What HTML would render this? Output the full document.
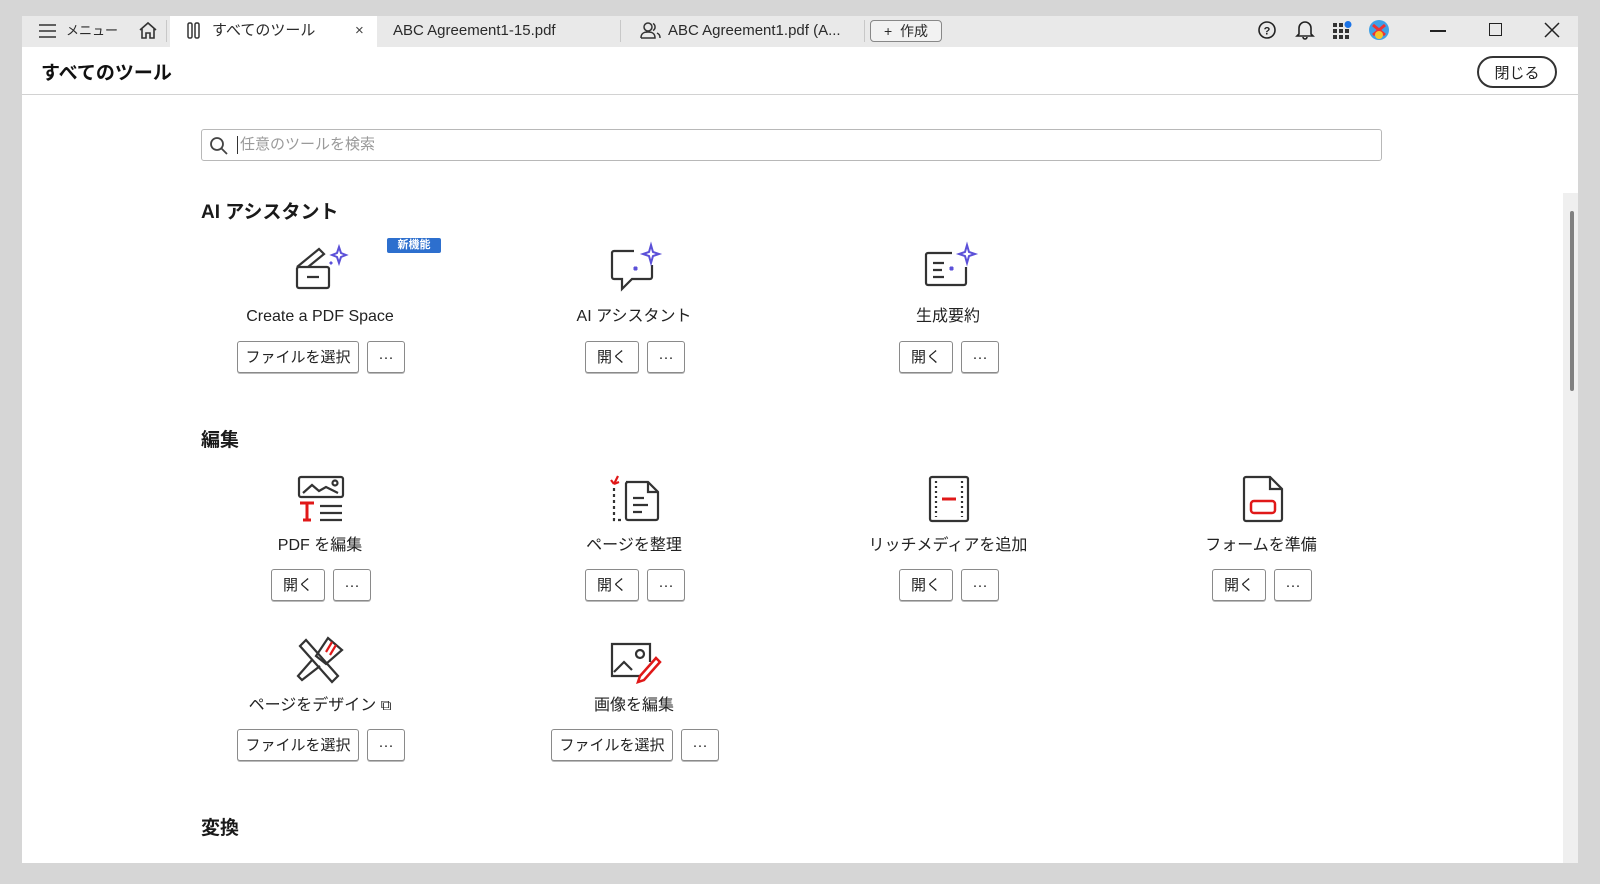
<!DOCTYPE html>
<html><head><meta charset="utf-8"><style>
*{margin:0;padding:0;box-sizing:border-box}
body{width:1600px;height:884px;background:#d6d6d6;font-family:"Liberation Sans","Noto Sans CJK JP",sans-serif;color:#222;position:relative;overflow:hidden}
.a{position:absolute}
.win{left:22px;top:16px;width:1556px;height:847px;background:#fff}
.tabbar{left:22px;top:16px;width:1556px;height:31px;background:#e9e9e9}
.t{position:absolute;white-space:nowrap;font-size:15px;color:#2a2a2a;line-height:1}
.btn{position:absolute;height:32px;border:1px solid #8a8a8a;border-radius:3px;background:#fff;font-size:15px;line-height:1;display:flex;align-items:center;justify-content:center;color:#222;box-shadow:0 1px 0 #bbb}
.lbl{position:absolute;font-size:16px;line-height:20px;text-align:center;width:300px;white-space:nowrap;color:#222}
.h{position:absolute;font-size:19px;font-weight:bold;color:#1a1a1a}
svg{position:absolute;overflow:visible}
</style></head><body>
<div class="a win"></div>
<div class="a tabbar"></div>
<svg style="left:39px;top:24px" width="18" height="14"><path d="M0 1H17M0 7H17M0 13H17" stroke="#333" stroke-width="1.6"/></svg>
<div class="t" style="left:66px;top:24px;font-size:13px">メニュー</div>
<svg style="left:138px;top:21px" width="20" height="18"><path d="M2 9L10 2L18 9M4 7V17H8V12H12V17H16V7" fill="none" stroke="#333" stroke-width="1.6"/></svg>
<div class="a" style="left:166px;top:20px;width:1px;height:22px;background:#c8c8c8"></div>
<div class="a" style="left:170px;top:16px;width:207px;height:31px;background:#fff"></div>
<svg style="left:187px;top:22px" width="14" height="17"><rect x="1" y="1" width="4" height="15" rx="1.5" fill="none" stroke="#333" stroke-width="1.5"/><rect x="8" y="1" width="4" height="15" rx="1.5" fill="none" stroke="#333" stroke-width="1.5"/></svg>
<div class="t" style="left:212px;top:23px">すべてのツール</div>
<div class="t" style="left:355px;top:23px;color:#444">×</div>
<div class="t" style="left:393px;top:23px">ABC Agreement1-15.pdf</div>
<div class="a" style="left:620px;top:20px;width:1px;height:22px;background:#c8c8c8"></div>
<svg style="left:640px;top:21px" width="22" height="18"><circle cx="8" cy="6" r="4" fill="none" stroke="#333" stroke-width="1.5"/><path d="M1 17C1 12 4 11 8 11S15 12 15 17H1M13 2.5A4 4 0 0 1 13 9.5M17 12C19 13 20 14 20 17" fill="none" stroke="#333" stroke-width="1.5"/></svg>
<div class="t" style="left:668px;top:23px">ABC Agreement1.pdf (A...</div>
<div class="a" style="left:864px;top:20px;width:1px;height:22px;background:#c8c8c8"></div>
<div class="a" style="left:870px;top:20px;width:72px;height:22px;border:1px solid #888;border-radius:4px;background:#f2f2f2;display:flex;align-items:center;justify-content:center;font-size:14px;color:#2a2a2a">+&nbsp; 作成</div>
<svg style="left:1258px;top:21px" width="18" height="18"><circle cx="9" cy="9" r="8" fill="none" stroke="#222" stroke-width="1.6"/><text x="9" y="13.5" font-size="11" font-weight="bold" text-anchor="middle" fill="#222" font-family="Liberation Sans">?</text></svg>
<svg style="left:1296px;top:20px" width="18" height="20"><path d="M3 14V8A6 6 0 0 1 15 8V14L17 16H1Z M7 17A2 2 0 0 0 11 17" fill="none" stroke="#222" stroke-width="1.6"/></svg>
<svg style="left:1333px;top:21px" width="20" height="18"><g fill="#333"><rect x="0" y="2" width="4" height="4"/><rect x="6" y="2" width="4" height="4"/><rect x="0" y="8" width="4" height="4"/><rect x="6" y="8" width="4" height="4"/><rect x="12" y="8" width="4" height="4"/><rect x="0" y="14" width="4" height="4"/><rect x="6" y="14" width="4" height="4"/><rect x="12" y="14" width="4" height="4"/></g><circle cx="15" cy="3.5" r="3.5" fill="#1a73e8"/></svg>
<svg style="left:1369px;top:20px" width="20" height="20"><circle cx="10" cy="10" r="10" fill="#3fa0e8"/><path d="M4 5L16 15M16 5L4 15" stroke="#e33" stroke-width="3"/><circle cx="10" cy="15" r="4" fill="#f7c52b"/></svg>
<div class="a" style="left:1430px;top:30px;width:16px;height:1.5px;background:#222"></div>
<div class="a" style="left:1489px;top:23px;width:13px;height:13px;border:1.5px solid #222"></div>
<svg style="left:1545px;top:23px" width="14" height="14"><path d="M0 0L14 14M14 0L0 14" stroke="#222" stroke-width="1.5"/></svg>
<div class="a" style="left:22px;top:94px;width:1556px;height:1px;background:#d2d2d2"></div>
<div class="a" style="left:41px;top:58px;font-size:19px;font-weight:bold;color:#111">すべてのツール</div>
<div class="a" style="left:1477px;top:56px;width:80px;height:32px;border:2px solid #333;border-radius:16px;display:flex;align-items:center;justify-content:center;font-size:15px">閉じる</div>
<div class="a" style="left:1563px;top:193px;width:15px;height:670px;background:#efefef"></div>
<div class="a" style="left:1570px;top:211px;width:4px;height:180px;background:#808080;border-radius:2px"></div>
<div class="a" style="left:201px;top:129px;width:1181px;height:32px;border:1px solid #b8b8b8;border-radius:3px"></div>
<svg style="left:210px;top:137px" width="18" height="18"><circle cx="7" cy="7" r="6" fill="none" stroke="#444" stroke-width="1.8"/><path d="M11.5 11.5L17 17" stroke="#444" stroke-width="1.8"/></svg>
<div class="a" style="left:237px;top:136px;width:1px;height:18px;background:#333"></div>
<div class="t" style="left:240px;top:137px;color:#9a9a9a">任意のツールを検索</div>
<div class="h" style="left:201px;top:197px">AI アシスタント</div>
<div class="a" style="left:387px;top:238px;width:54px;height:15px;background:#2d6fce;color:#fff;font-size:11px;font-weight:bold;text-align:center;line-height:15px;border-radius:2px">新機能</div>
<svg style="left:294px;top:245px" width="52" height="46" fill="none" stroke="#333" stroke-width="2.2"><rect x="3" y="22" width="32" height="21" rx="2"/><path d="M3 22L25 4L30 9L14 22M13 32H25"/><path d="M45 2L47 8L52 10L47 12L45 18L43 12L38 10L43 8Z" stroke="#5b50d8" stroke-width="2"/><path d="M36 17l2 2m0-2l-2 2" stroke="#5b50d8" stroke-width="2.5"/></svg>
<div class="lbl" style="left:170px;top:307px">Create a PDF Space</div>
<div class="btn" style="left:237px;top:341px;width:122px">ファイルを選択</div>
<div class="btn" style="left:367px;top:341px;width:38px">···</div>
<svg style="left:610px;top:245px" width="56" height="48" fill="none" stroke="#333" stroke-width="2.2"><path d="M24 6H4a2 2 0 0 0-2 2V32a2 2 0 0 0 2 2H12V44L22 34H40a2 2 0 0 0 2-2V20"/><path d="M41 0L43 7L49 9L43 11L41 18L39 11L33 9L39 7Z" stroke="#5b50d8" stroke-width="2"/><path d="M24 22l3 3m0-3l-3 3" stroke="#5b50d8" stroke-width="2.5"/></svg>
<div class="lbl" style="left:484px;top:307px">AI アシスタント</div>
<div class="btn" style="left:585px;top:341px;width:54px">開く</div>
<div class="btn" style="left:647px;top:341px;width:38px">···</div>
<svg style="left:924px;top:245px" width="56" height="44" fill="none" stroke="#333" stroke-width="2.2"><path d="M28 8H4a2 2 0 0 0-2 2V38a2 2 0 0 0 2 2H40a2 2 0 0 0 2-2V22"/><path d="M9 18H20M9 25H18M9 32H20"/><path d="M43 0L45 7L51 9L45 11L43 18L41 11L35 9L41 7Z" stroke="#5b50d8" stroke-width="2"/><path d="M26 22l3 3m0-3l-3 3" stroke="#5b50d8" stroke-width="2.5"/></svg>
<div class="lbl" style="left:798px;top:307px">生成要約</div>
<div class="btn" style="left:899px;top:341px;width:54px">開く</div>
<div class="btn" style="left:961px;top:341px;width:38px">···</div>
<div class="h" style="left:201px;top:425px">編集</div>
<svg style="left:298px;top:475px" width="48" height="48" fill="none" stroke="#333" stroke-width="2.2"><rect x="1" y="2" width="44" height="20" rx="2"/><path d="M5 18L14 10L21 16L28 12L40 18"/><circle cx="37" cy="8" r="2.5"/><path d="M2 28H16M9 28V45M5 45H13" stroke="#e01818" stroke-width="3"/><path d="M22 31H44M22 38H44M22 45H44"/></svg>
<div class="lbl" style="left:170px;top:536px">PDF を編集</div>
<div class="btn" style="left:271px;top:569px;width:54px">開く</div>
<div class="btn" style="left:333px;top:569px;width:38px">···</div>
<svg style="left:608px;top:474px" width="56" height="50" fill="none" stroke="#333" stroke-width="2.2"><path d="M6 14V46H14" stroke-dasharray="3 3"/><path d="M18 8H40L50 18V44a2 2 0 0 1-2 2H20a2 2 0 0 1-2-2V10a2 2 0 0 1 2-2Z"/><path d="M40 8V18H50M25 24H36M25 31H40M25 38H34"/><path d="M10 2L6 10M6 10L3 6M6 10L11 8" stroke="#e01818" stroke-width="2.2"/></svg>
<div class="lbl" style="left:484px;top:536px">ページを整理</div>
<div class="btn" style="left:585px;top:569px;width:54px">開く</div>
<div class="btn" style="left:647px;top:569px;width:38px">···</div>
<svg style="left:928px;top:475px" width="42" height="48" fill="none" stroke="#333" stroke-width="2.2"><rect x="2" y="2" width="38" height="44" rx="2"/><path d="M8 6V42M34 6V42" stroke-dasharray="2 3"/><path d="M14 24H28" stroke="#e01818" stroke-width="3"/></svg>
<div class="lbl" style="left:798px;top:536px">リッチメディアを追加</div>
<div class="btn" style="left:899px;top:569px;width:54px">開く</div>
<div class="btn" style="left:961px;top:569px;width:38px">···</div>
<svg style="left:1242px;top:475px" width="42" height="48" fill="none" stroke="#333" stroke-width="2.2"><path d="M4 2H28L40 14V44a2 2 0 0 1-2 2H4a2 2 0 0 1-2-2V4a2 2 0 0 1 2-2Z"/><path d="M28 2V14H40"/><rect x="9" y="26" width="24" height="12" rx="3" stroke="#e01818" stroke-width="2.5"/></svg>
<div class="lbl" style="left:1111px;top:536px">フォームを準備</div>
<div class="btn" style="left:1212px;top:569px;width:54px">開く</div>
<div class="btn" style="left:1274px;top:569px;width:38px">···</div>
<svg style="left:296px;top:636px" width="50" height="48" fill="none" stroke="#333" stroke-width="2.2"><path d="M20 20L32 2L46 14L30 28Z"/><path d="M36 6L30 16M40 9L34 19" stroke="#e01818" stroke-width="2.2"/><path d="M4 10L10 4L42 40L36 46Z M24 30L6 44L2 40L16 24"/></svg>
<div class="lbl" style="left:170px;top:696px">ページをデザイン <span style="font-size:15px">⧉</span></div>
<div class="btn" style="left:237px;top:729px;width:122px">ファイルを選択</div>
<div class="btn" style="left:367px;top:729px;width:38px">···</div>
<svg style="left:610px;top:642px" width="54" height="42" fill="none" stroke="#333" stroke-width="2.2"><path d="M40 20V2H2V34H30"/><path d="M4 30L14 20L22 28"/><circle cx="30" cy="12" r="4"/><path d="M46 16L50 20L34 38L28 40L30 34Z" stroke="#e01818" stroke-width="2.5"/></svg>
<div class="lbl" style="left:484px;top:696px">画像を編集</div>
<div class="btn" style="left:551px;top:729px;width:122px">ファイルを選択</div>
<div class="btn" style="left:681px;top:729px;width:38px">···</div>
<div class="h" style="left:201px;top:813px">変換</div>
</body></html>
